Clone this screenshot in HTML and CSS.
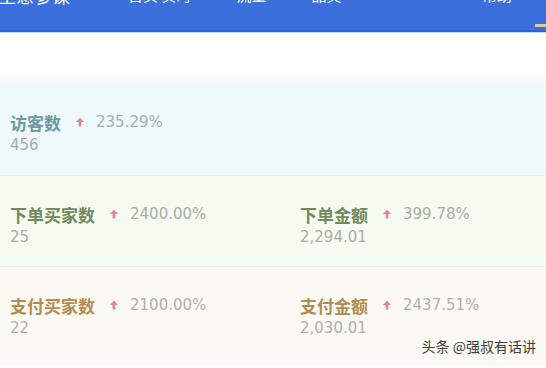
FILE: index.html
```html
<!DOCTYPE html>
<html>
<head>
<meta charset="utf-8">
<link rel="stylesheet" href="styles.css">
</head>
<body>
<div class="page">

<!--top bar-->
<div class="topbar">
	<div class="nav">
		<span class="brand">生意参谋</span>
		<span class="nav-item">首页 实时</span>
		<span class="nav-item">流量</span>
		<span class="nav-item">品类</span>
		<span class="nav-item tail">帮助</span>
	</div>
	<span class="tab-mark"></span>
</div>
<div class="gap"></div>

<!--visitors-->
<div class="band visit">
	<div class="cell">
		<div class="head"><span class="label">访客数</span><svg class="arrow" viewBox="0 0 9 10"><path d="M4.5 0 L9 5 H6 V10 H3 V5 H0 Z"/></svg><span class="rate">235.29%</span></div>
		<div class="value">456</div>
	</div>
</div>

<!--orders-->
<div class="band order">
	<div class="cell">
		<div class="head"><span class="label">下单买家数</span><svg class="arrow" viewBox="0 0 9 10"><path d="M4.5 0 L9 5 H6 V10 H3 V5 H0 Z"/></svg><span class="rate">2400.00%</span></div>
		<div class="value">25</div>
	</div>
	<div class="cell">
		<div class="head"><span class="label">下单金额</span><svg class="arrow" viewBox="0 0 9 10"><path d="M4.5 0 L9 5 H6 V10 H3 V5 H0 Z"/></svg><span class="rate">399.78%</span></div>
		<div class="value">2,294.01</div>
	</div>
</div>

<!--payments-->
<div class="band pay">
	<div class="cell">
		<div class="head"><span class="label">支付买家数</span><svg class="arrow" viewBox="0 0 9 10"><path d="M4.5 0 L9 5 H6 V10 H3 V5 H0 Z"/></svg><span class="rate">2100.00%</span></div>
		<div class="value">22</div>
	</div>
	<div class="cell">
		<div class="head"><span class="label">支付金额</span><svg class="arrow" viewBox="0 0 9 10"><path d="M4.5 0 L9 5 H6 V10 H3 V5 H0 Z"/></svg><span class="rate">2437.51%</span></div>
		<div class="value">2,030.01</div>
	</div>
	<div class="watermark">头条 @强叔有话讲</div>
</div>

</div>
</body>
</html>
```

FILE: styles.css
```css
body {
	margin: 0;
	font-family: "DejaVu Sans", "Noto Sans CJK SC", sans-serif;
}
.page {
	width: 546px;
	height: 368px;
	overflow: hidden;
	background-color: #ffffff;
}

.topbar {
	position: relative;
	height: 30px;
	background-color: #3a6fdc;
	border-bottom: 2px solid #3265cc;
	box-shadow: 0 1px 0 #c9daf5;
	overflow: hidden;
}
.nav {
	display: flex;
	margin-top: -15px;
	color: #ffffff;
	font-family: "Noto Sans CJK SC", sans-serif;
	font-size: 18px;
	line-height: 20px;
}
.brand {
	margin-left: -2px;
	width: 130px;
}
.nav-item {
	margin-right: 45px;
	font-size: 15px;
}
.nav-item.tail {
	margin-left: auto;
	margin-right: 34px;
}
.tab-mark {
	position: absolute;
	right: 0;
	bottom: 3px;
	width: 11px;
	height: 3px;
	background-color: #d8cf9c;
}

.gap {
	height: 52px;
	background: linear-gradient(#ffffff 70%, #f3fafc);
}

.band {
	position: relative;
	display: flex;
	height: 91px;
	padding: 28px 0 0 10px;
	box-sizing: border-box;
	border-bottom: 1px solid #e6ece6;
}
.cell {
	flex: 0 0 290px;
}
.head {
	display: flex;
	align-items: center;
	height: 20px;
}
.label {
	font-family: "Noto Sans CJK SC", sans-serif;
	font-size: 17px;
	font-weight: bold;
}
.arrow {
	width: 8px;
	height: 10px;
	margin: 0 12px 0 15px;
	fill: #e2868b;
}
.rate {
	font-size: 15px;
}
.value {
	margin-top: 3px;
	font-size: 15px;
	line-height: 20px;
}

.visit {
	height: 92px;
	background-color: #eff8fb;
}
.visit .label { color: #6b98a2; }
.visit .rate, .visit .value { color: #a2aeb0; }

.order {
	background-color: #f6fbf1;
}
.order .label { color: #708a5b; }
.order .rate, .order .value { color: #a9ada4; }

.pay {
	height: 99px;
	border-bottom: none;
	background-color: #fbf9f3;
}
.pay .label { color: #b28c52; }
.pay .rate, .pay .value { color: #b4aea4; }

.watermark {
	position: absolute;
	right: 10px;
	bottom: 10px;
	font-family: "Noto Sans CJK SC", sans-serif;
	font-size: 14px;
	color: #3c3c3c;
}
```
